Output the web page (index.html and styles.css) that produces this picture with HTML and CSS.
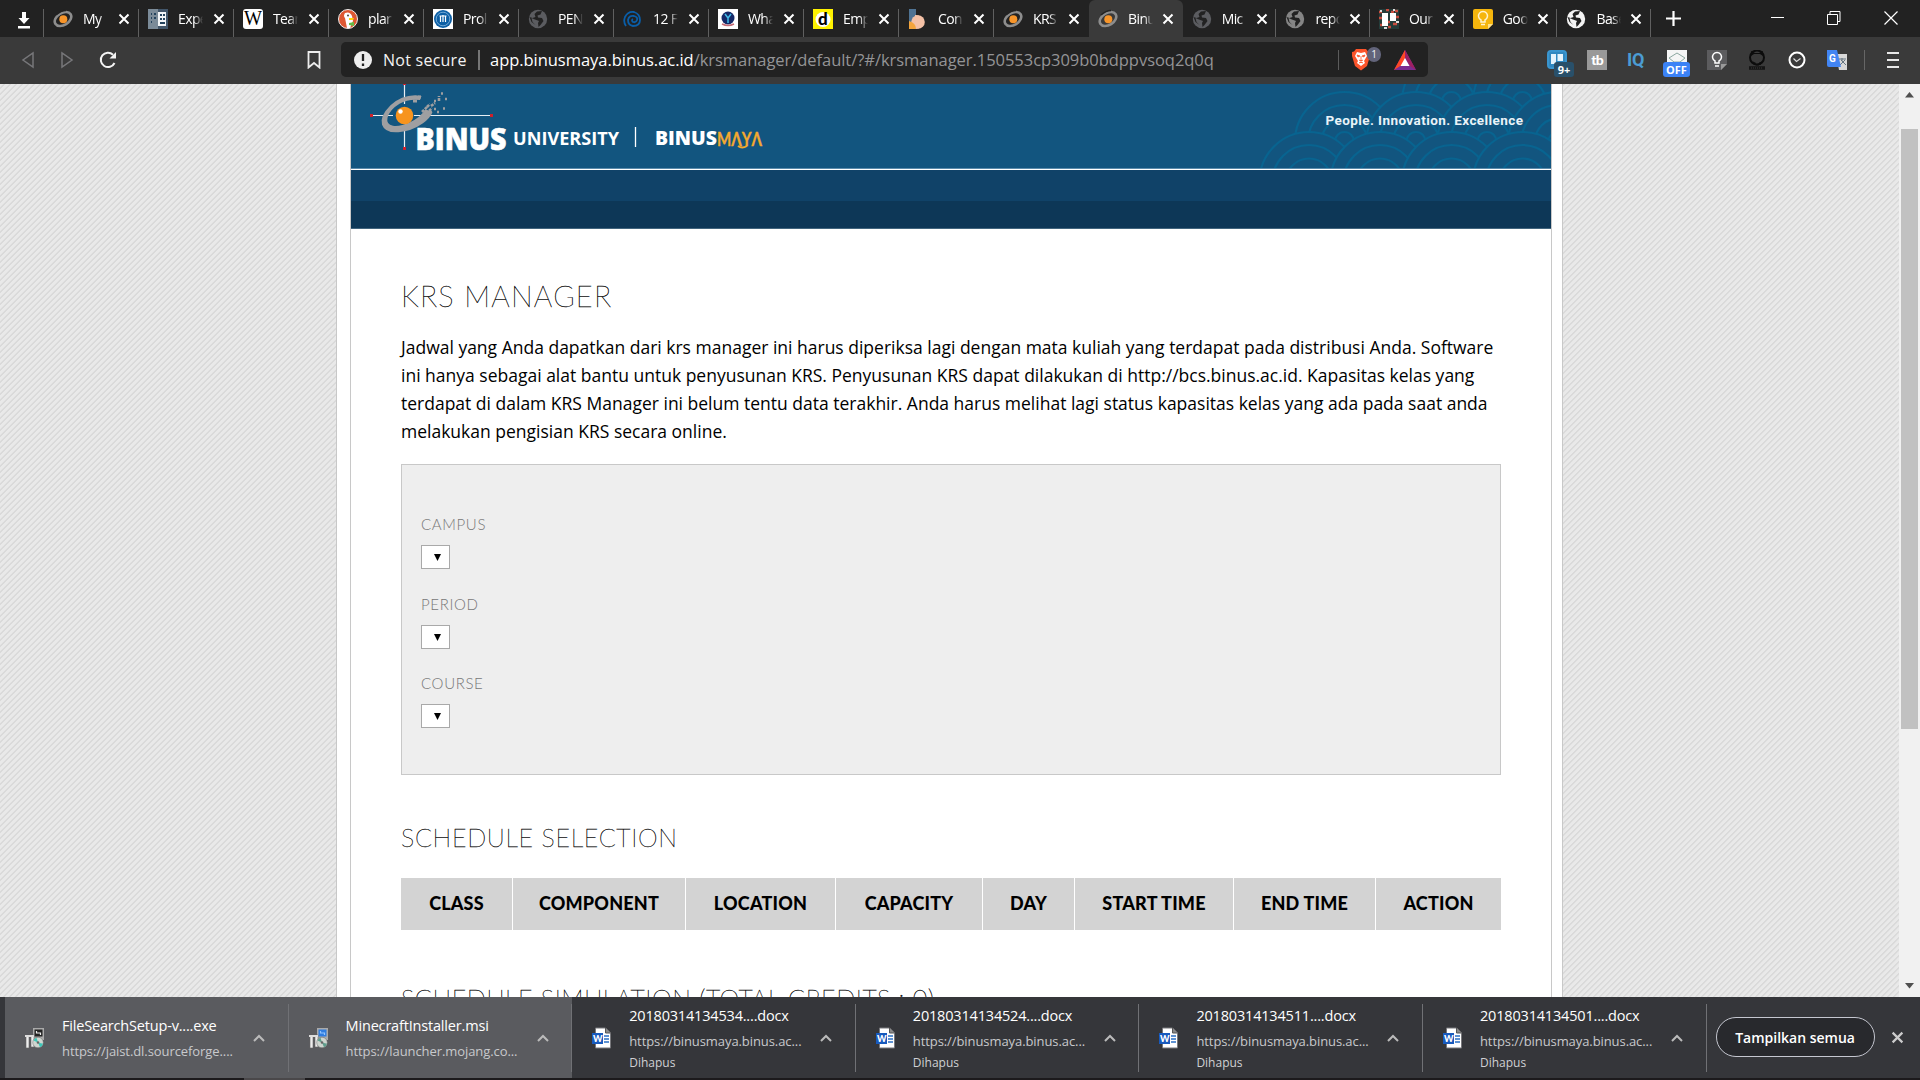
FILE: index.html
```html
<!DOCTYPE html>
<html lang="id">
<head>
<meta charset="utf-8">
<title>Binusmaya - KRS Manager</title>
<link rel="stylesheet" href="styles.css">
</head>
<body>
<svg class="defs" width="0" height="0">
  <symbol id="binus" viewBox="0 0 20 20"><ellipse cx="10" cy="10" rx="9" ry="6" transform="rotate(-32 10 10)" fill="none" stroke="#8d8d8d" stroke-width="2.600"/><path d="M3 6Q8 1.500 13 1.500" stroke="#222" stroke-width="1.500" fill="none"/><circle cx="10.300" cy="10.300" r="4" fill="#f7952a"/></symbol>
  <symbol id="globe" viewBox="0 0 20 20"><circle cx="10" cy="10" r="9.200" fill="currentColor"/><path d="M9 2.500l5-.5-1.500 3.500-3 1 .5 2 4 .5 1.500 3-3 4-2 2-.5-4 1-2-4-1.500-3.500-1.500 1 4 3 3-4-3-2-5 3 1 3-1-1-3z" fill="#222"/></symbol>
  <symbol id="word" viewBox="0 0 20 22"><path d="M3.500 1h10l5 5v15h-15z" fill="#fff" stroke="#77777b"/><path d="M13.500 1v5h5" fill="#888" stroke="#555"/><path d="M12 9h5M12 12h5M12 15h5" stroke="#2a6fc4" stroke-width="1.300"/><path d="M0 6h11v11H0z" fill="#185abd"/><text x="1" y="14.700" font-family="Lato, sans-serif" font-weight="900" font-size="9" fill="#fff">W</text></symbol>
  <symbol id="setup" viewBox="0 0 20 22"><path d="M8 1h11v12H8z" fill="#aaa"/><path d="M9.500 2.500h8v7h-8z" fill="var(--screen)"/><path d="M11.500 4v2h4v2" fill="none" stroke="var(--mark)" stroke-width="1.200"/><path d="M1 9h3v12H1zM6 8h3v12H6z" fill="#eee" stroke="#666" stroke-width=".6"/><path d="M0 9h9" stroke="#ddd" stroke-width="2"/><circle cx="13" cy="15.500" r="5.300" fill="#cfd6d0" stroke="#666" stroke-width=".5"/><path d="M13 15.500l-4.500-2a5 5 0 0 1 3-2.800zM13 15.500l2 4.800a5 5 0 0 0 3-3.500z" fill="var(--disc)"/><circle cx="13" cy="15.500" r="1.300" fill="#666"/></symbol>
  <symbol id="x" viewBox="0 0 12 12"><path d="M1.500 1.500l9 9M10.500 1.500l-9 9" stroke="currentColor" stroke-width="2"/></symbol>
  <symbol id="up" viewBox="0 0 12 8"><path d="M1 7l5-5 5 5" fill="none" stroke="#bbb" stroke-width="2"/></symbol>
</svg>

<header class="tabs">
  <div class="pinned"><svg width="14" height="18" viewBox="0 0 14 18"><path d="M5 1h4v6h3.500L7 13 1.500 7H5zM1 15h12v2.500H1z" fill="#fff"/></svg></div>
  <div class="tab"><svg class="fav"><use href="#binus"/></svg><span>My</span><svg class="close"><use href="#x"/></svg></div>
  <div class="tab"><svg class="fav" viewBox="0 0 20 20"><path d="M0 0h10v20H0z" fill="#7b8b98"/><path d="M10 0h10v20H10z" fill="#42566a"/><path d="M10 3h8v14h-8z" fill="#f2f5f7"/><path d="M3 4h1v2H3zM6 4h2v2H6zM3 8h1v2H3zM6 8h2v2H6zM3 12h1v2H3zM12 5h2v2h-2zM15 5h2v2h-2zM12 9h2v2h-2zM15 9h2v2h-2zM12 13h5v2h-5z" fill="#24435d"/></svg><span>Expe</span><svg class="close"><use href="#x"/></svg></div>
  <div class="tab"><svg class="fav" viewBox="0 0 20 20"><rect width="20" height="20" rx="3" fill="#fff"/><text x="1" y="16" class="wiki" textLength="18" lengthAdjust="spacingAndGlyphs">W</text></svg><span>Tear</span><svg class="close"><use href="#x"/></svg></div>
  <div class="tab"><svg class="fav" viewBox="0 0 20 20"><circle cx="10" cy="10" r="9.500" fill="#de5833" stroke="#eee"/><path d="M7 4q5-2 7 3l1 5-3 7h-3L7 9q-2-2 0-5z" fill="#fff"/><path d="M11 9h5l-1 2h-4z" fill="#fdd20a"/><path d="M11 14l5-1v4l-5-1z" fill="#65bc46"/><circle cx="10" cy="6.500" r=".9" fill="#333"/></svg><span>plar</span><svg class="close"><use href="#x"/></svg></div>
  <div class="tab"><svg class="fav" viewBox="0 0 20 20"><path d="M0 0h20v20H0z" fill="#fff"/><circle cx="10" cy="10" r="9" fill="#0c5fa5"/><circle cx="10" cy="10" r="6.800" fill="none" stroke="#9cc6e8" stroke-width=".7"/><path d="M6.500 7h7M7.500 7v6M10 6v7M12.500 7v6" stroke="#fff" stroke-width="1.200"/></svg><span>Prol</span><svg class="close"><use href="#x"/></svg></div>
  <div class="tab"><svg class="fav dim"><use href="#globe"/></svg><span>PEN</span><svg class="close"><use href="#x"/></svg></div>
  <div class="tab"><svg class="fav" viewBox="0 0 20 20"><path d="M3 17q-3-4-1-9 3-6 9-5 6 2 6 8t-7 6q-5-1-5-6 1-5 6-4 4 1 3 4-1 3-4 2-2-2 0-3" fill="none" stroke="#0a5ea8" stroke-width="1.800"/></svg><span>12 F</span><svg class="close"><use href="#x"/></svg></div>
  <div class="tab"><svg class="fav" viewBox="0 0 20 20"><path d="M0 0h20v20H0z" fill="#fff"/><circle cx="10" cy="9" r="6.500" fill="#152968"/><path d="M7 5l3 4 3-4M10 9v5" fill="none" stroke="#43bde9" stroke-width="1.500"/><path d="M4 15q6 3 12 0" fill="none" stroke="#c56a75" stroke-width="1.500"/></svg><span>Wha</span><svg class="close"><use href="#x"/></svg></div>
  <div class="tab"><svg class="fav" viewBox="0 0 20 20"><path d="M0 0h20v20H0z" fill="#fff200"/><circle cx="10" cy="10.500" r="7.500" fill="#fff"/><text x="5" y="16" class="fav-d">d</text></svg><span>Emp</span><svg class="close"><use href="#x"/></svg></div>
  <div class="tab"><svg class="fav" viewBox="0 0 20 20"><path d="M1 0h7v20H1z" fill="#4f7393"/><path d="M8 6a7 7 0 0 1 0 14H7V6z" fill="#f4c1a6"/><circle cx="10" cy="13" r="6.800" fill="#f4c1a6"/><path d="M1 12q7 2 7 8H1z" fill="#f3a43c"/></svg><span>Con</span><svg class="close"><use href="#x"/></svg></div>
  <div class="tab last"><svg class="fav"><use href="#binus"/></svg><span>KRS</span><svg class="close"><use href="#x"/></svg></div>
  <div class="tab slim active"><svg class="fav"><use href="#binus"/></svg><span>Binu</span><svg class="close"><use href="#x"/></svg></div>
  <div class="tab slim"><svg class="fav dim"><use href="#globe"/></svg><span>Mic</span><svg class="close"><use href="#x"/></svg></div>
  <div class="tab slim"><svg class="fav mid"><use href="#globe"/></svg><span>repo</span><svg class="close"><use href="#x"/></svg></div>
  <div class="tab slim"><svg class="fav" viewBox="0 0 20 20"><path d="M0 0h20v20H0z" fill="#243c3a"/><path d="M0 3h3M7 1h3M16 2h3M0 9h3M1 16h3M8 13h3M17 8h3M14 15h4M9 18h3M12 3h3" stroke="#c84d3f" stroke-width="2.500"/><path d="M1 1h2v2H1zM14 0h2v2h-2zM17 12h3v2h-3zM5 18h3v2H5z" fill="#ddd"/><path d="M3 4h6v13H3zM11 4h6v8h-6z" fill="#fff"/></svg><span>Our</span><svg class="close"><use href="#x"/></svg></div>
  <div class="tab slim"><svg class="fav" viewBox="0 0 20 20"><path d="M2 0h16a2 2 0 0 1 2 2v13l-5 5H2a2 2 0 0 1-2-2V2a2 2 0 0 1 2-2z" fill="#f6b60d"/><path d="M15 20v-5h5z" fill="#ffe28a"/><path d="M8 13v-2a4.500 4.500 0 1 1 4 0v2zM8 15.500h4" fill="none" stroke="#fff3d0" stroke-width="1.500"/></svg><span>Goo</span><svg class="close"><use href="#x"/></svg></div>
  <div class="tab slim"><svg class="fav bright"><use href="#globe"/></svg><span>Base</span><svg class="close"><use href="#x"/></svg></div>
  <svg class="new-tab" width="15" height="15" viewBox="0 0 15 15"><path d="M7.500 0v15M0 7.500h15" stroke="#fff" stroke-width="2.200"/></svg>
  <div class="window-buttons">
    <svg width="14" height="14" viewBox="0 0 14 14"><path d="M1 6.500h13" stroke="#fff"/></svg>
    <svg width="14" height="14" viewBox="0 0 14 14"><path d="M.5 3.500h10v10H.5zM3 3.500v-3h10v10h-2.500" fill="none" stroke="#fff"/></svg>
    <svg width="14" height="14" viewBox="0 0 14 14"><path d="M.5.5l13 13M13.500.5l-13 13" stroke="#fff" stroke-width="1.200"/></svg>
  </div>
</header>

<nav class="toolbar">
  <div class="nav-buttons">
    <svg width="14" height="18" viewBox="0 0 14 18"><path d="M12 2v14L2 9z" fill="none" stroke="#77777a" stroke-width="1.500"/></svg>
    <svg width="14" height="18" viewBox="0 0 14 18"><path d="M2 2v14l10-7z" fill="none" stroke="#77777a" stroke-width="1.500"/></svg>
    <svg width="18" height="18" viewBox="0 0 18 18"><path d="M15.500 12A7.200 7.200 0 1 1 14 3.700" fill="none" stroke="#f4f4f4" stroke-width="2"/><path d="M17 1v6.500h-6.500z" fill="#f4f4f4"/></svg>
  </div>
  <svg class="bookmark" width="14" height="18" viewBox="0 0 14 18"><path d="M1.500 1h11v15.500L7 12l-5.500 4.500z" fill="none" stroke="#ededed" stroke-width="1.800"/></svg>
  <div class="address">
    <svg width="18" height="18" viewBox="0 0 18 18"><circle cx="9" cy="9" r="9" fill="#eee"/><path d="M9 3v7M9 12.500v2.500" stroke="#222" stroke-width="2.300"/></svg>
    <span class="insecure">Not secure</span><i></i>
    <span class="url"><b>app.binusmaya.binus.ac.id</b>/krsmanager/default/?#/krsmanager.150553cp309b0bdppvsoq2q0q</span>
    <i class="thin"></i>
    <span class="shield"><svg width="20" height="23" viewBox="0 0 20 23"><path d="M5 1h10l2 2.500 2 .5v4l-3 10-6 4.500L4 18 1 8V4l2-.5z" fill="#fb542b"/><path d="M6 4l4 1 4-1 2 4-3 5 1 2-4 3-4-3 1-2-3-5z" fill="#fff"/><path d="M6 7l3 1-2 1zM14 7l-3 1 2 1zM10 8v5M8 12l2 1 2-1M8 15l2-1 2 1" fill="#fb542b" stroke="#fb542b" stroke-width=".8"/></svg><em>1</em></span>
    <svg class="bat" width="22" height="20" viewBox="0 0 22 20"><path d="M11 0L0 20h22z" fill="#7b2d91"/><path d="M11 0L0 20l11-7z" fill="#ff4724"/><path d="M11 0l11 20-6-4-5-9z" fill="#9e1f63"/><path d="M11 8l4.500 8h-9z" fill="#fff"/></svg>
  </div>
  <div class="extensions">
    <span class="ext"><svg width="20" height="20" viewBox="0 0 20 20"><rect x="1" y="1" width="18" height="17" rx="3" fill="#3188c0" stroke="#3995cf" stroke-width="2"/><path d="M4 4h5v10H4zM10.500 4H16v7h-5.500z" fill="#e6f4fc"/></svg><em class="nine">9+</em></span>
    <span class="ext tb">tb</span>
    <span class="ext iq">IQ</span>
    <span class="ext"><svg width="20" height="20" viewBox="0 0 20 20"><path d="M0 0h20v20H0z" fill="#f5f5f5"/><path d="M2 8l8-5 8 5-5 4H7z" fill="none" stroke="#8ba7a0"/></svg><em class="off">OFF</em></span>
    <svg width="20" height="20" viewBox="0 0 20 20"><path d="M0 0h20v14l-6 6H0z" fill="#5c5c5e"/><path d="M14 20v-6h6z" fill="#999"/><path d="M8 13v-2a4.500 4.500 0 1 1 4 0v2zM8 16h4" fill="none" stroke="#fff" stroke-width="1.500"/></svg>
    <svg width="20" height="20" viewBox="0 0 20 20"><circle cx="10" cy="7.500" r="7" fill="none" stroke="#0c0c0c" stroke-width="2"/><path d="M4 1l4 2h4l4-2v5l-3-2H7L4 6z" fill="#0c0c0c"/><path d="M5.500 11q2 1.500 3 1.500v3h3.500v-3q1.500 0 3-1.500l-1.500 4h-6z" fill="#0c0c0c"/><path d="M2 18h16" stroke="#151515" stroke-width="3.500"/><path d="M4 18h12" stroke="#3a3a3a" stroke-dasharray="1 1"/></svg>
    <svg width="20" height="20" viewBox="0 0 20 20"><circle cx="10" cy="10" r="7.500" fill="none" stroke="#fff" stroke-width="2"/><path d="M6.500 8.500l3 3 4-3" fill="none" stroke="#ddd" stroke-width="1.200"/></svg>
    <svg width="20" height="20" viewBox="0 0 20 20"><path d="M9 4h11v16h-8z" fill="#d8d8d8"/><path d="M12 9h7M15 8v3M13 15l5-5M14 10l5 5" stroke="#657580"/><path d="M0 0h10l4 17H2a2 2 0 0 1-2-2z" fill="#4285f4"/><text x="2" y="12" class="fav-g">G</text></svg>
  </div>
  <i class="tool-sep"></i>
  <svg class="menu" width="12" height="18" viewBox="0 0 12 18"><path d="M0 2h12M0 9h12M0 16h12" stroke="#e8e8e8" stroke-width="2"/></svg>
</nav>

<div class="viewport">
  <div class="page">
    <div class="outer"><main class="inner">
      <div class="brand">
        <svg class="logo" width="480" height="84" viewBox="351 84 480 84">
          <path d="M404.500 84v20M404.500 126v22M372 115.500h21M414 115.500h77" stroke="#e7eff5" stroke-width="1.200"/>
          <path d="M403 84h3v1h-3zM370 114h3v3h-3zM490 114h3v3h-3zM403 147h3v3h-3z" fill="#cf202b"/>
          <path d="M420 100l1.500-4-6-.8q-14-.2-25 10-11 11-8.500 19.500 3 8.500 16.500 7.500 13-1 24.500-9 7-5 9.500-11l-7-3q-5 8-15.500 13-10 4.500-17 3.500-7-1.500-5.500-8 2-8 12-14 9-5 20.500-3.700z" fill="#9f9fa1"/>
          <path d="M418 97h3M413 101h4" stroke="#9f9fa1" stroke-width="3"/>
          <path d="M422 112l5-5M426 115l6-5M427 107l3-3M431 106l4-3M429 111l3-3M434 109h2M437 112h2M439 101v-5M443 108.500h2M445 99h2M441 93.500h2M434 101h2" stroke="#9f9fa1" stroke-width="2.600" stroke-dasharray="3 1"/>
          <circle cx="404.500" cy="115.500" r="8.800" fill="#f7941e"/><circle cx="400.500" cy="111.500" r="2.200" fill="#fff"/>
          <text x="415.500" y="149.500" class="lg heavy big" font-size="30" textLength="91" lengthAdjust="spacingAndGlyphs">BINUS</text>
          <text x="513" y="145.300" class="lg bold" font-size="18.500" textLength="106" lengthAdjust="spacingAndGlyphs">UNIVERSITY</text>
          <path d="M635.500 127v20" stroke="#fff" stroke-width="1.300"/>
          <text x="655" y="144.500" class="lg heavy" font-size="18.500" textLength="62" lengthAdjust="spacingAndGlyphs">BINUS</text>
          <text x="717" y="145.500" class="lg maya" font-size="19" textLength="45" lengthAdjust="spacingAndGlyphs">MΛYΛ</text>
          <path d="M738 146q4 3 9 0" fill="none" stroke="#f3a82f" stroke-width="2"/>
        </svg>
        <svg class="waves" width="311" height="84" viewBox="1240 84 311 84">
          <defs><g id="w"><circle r="49.500"/><circle r="36.500"/><circle r="23"/><circle r="9.500"/></g></defs>
          <g fill="#12557f" stroke="#086490" stroke-width="2.200">
            <use href="#w" x="1451.500" y="101.500"/><use href="#w" x="1522.500" y="101.500"/>
            <use href="#w" x="1344.500" y="141.500"/><use href="#w" x="1416" y="141.500"/><use href="#w" x="1487" y="141.500"/><use href="#w" x="1558" y="141.500"/>
            <use href="#w" x="1309" y="181.500"/><use href="#w" x="1380" y="181.500"/><use href="#w" x="1451.500" y="181.500"/><use href="#w" x="1522.500" y="181.500"/>
          </g>
          <text x="1325.500" y="124.500" class="tagline" textLength="197.500">People. Innovation. Excellence</text>
        </svg>
      </div>
      <div class="menubar"></div>
      <article class="content">
        <h1>KRS MANAGER</h1>
        <p>Jadwal yang Anda dapatkan dari krs manager ini harus diperiksa lagi dengan mata kuliah yang terdapat pada distribusi Anda. Software<br>ini hanya sebagai alat bantu untuk penyusunan KRS. Penyusunan KRS dapat dilakukan di http://bcs.binus.ac.id. Kapasitas kelas yang<br>terdapat di dalam KRS Manager ini belum tentu data terakhir. Anda harus melihat lagi status kapasitas kelas yang ada pada saat anda<br>melakukan pengisian KRS secara online.</p>
        <section class="filters">
          <div class="field"><label>CAMPUS</label><div class="select"><svg width="7" height="7"><path d="M0 0h7L3.500 7z"/></svg></div></div>
          <div class="field"><label>PERIOD</label><div class="select"><svg width="7" height="7"><path d="M0 0h7L3.500 7z"/></svg></div></div>
          <div class="field"><label>COURSE</label><div class="select"><svg width="7" height="7"><path d="M0 0h7L3.500 7z"/></svg></div></div>
        </section>
        <h2>SCHEDULE SELECTION</h2>
        <div class="thead"><span>CLASS</span><span>COMPONENT</span><span>LOCATION</span><span>CAPACITY</span><span>DAY</span><span>START TIME</span><span>END TIME</span><span>ACTION</span></div>
        <h2 class="simulation">SCHEDULE SIMULATION (TOTAL CREDITS : 0)</h2>
      </article>
    </main></div>
  </div>
  <aside class="scroll"><svg width="9" height="6"><path d="M0 5.500L4.500 0 9 5.500z" fill="#505050"/></svg><div class="thumb"></div><svg width="9" height="6"><path d="M0 0h9L4.500 5.500z" fill="#505050"/></svg></aside>
</div>

<footer class="downloads">
  <div class="item hot dos"><svg class="file"><use href="#setup"/></svg><div class="info"><strong>FileSearchSetup-v....exe</strong><span>https://jaist.dl.sourceforge....</span></div><svg class="chev"><use href="#up"/></svg></div>
  <div class="item hot msi"><svg class="file"><use href="#setup"/></svg><div class="info"><strong>MinecraftInstaller.msi</strong><span>https://launcher.mojang.co...</span></div><svg class="chev"><use href="#up"/></svg></div>
  <div class="item"><svg class="file"><use href="#word"/></svg><div class="info"><strong>20180314134534....docx</strong><span>https://binusmaya.binus.ac...</span><small>Dihapus</small></div><svg class="chev"><use href="#up"/></svg></div>
  <div class="item"><svg class="file"><use href="#word"/></svg><div class="info"><strong>20180314134524....docx</strong><span>https://binusmaya.binus.ac...</span><small>Dihapus</small></div><svg class="chev"><use href="#up"/></svg></div>
  <div class="item"><svg class="file"><use href="#word"/></svg><div class="info"><strong>20180314134511....docx</strong><span>https://binusmaya.binus.ac...</span><small>Dihapus</small></div><svg class="chev"><use href="#up"/></svg></div>
  <div class="item"><svg class="file"><use href="#word"/></svg><div class="info"><strong>20180314134501....docx</strong><span>https://binusmaya.binus.ac...</span><small>Dihapus</small></div><svg class="chev"><use href="#up"/></svg></div>
  <button>Tampilkan semua</button>
  <svg class="dismiss"><use href="#x"/></svg>
</footer>
<div class="taskbar"><i></i></div>
</body>
</html>
```
FILE: styles.css
```css
* { box-sizing: border-box; }
body { margin: 0; width: 1920px; height: 1080px; overflow: hidden; display: flex; flex-direction: column; background: #fff; font-family: "Open Sans", "Noto Sans", sans-serif; }
svg { display: block; flex: none; }
.defs { position: absolute; }
i, em { font-style: normal; }

.tabs { height: 37px; flex: none; display: flex; background: #222; color: #fff; }
.pinned { width: 44px; border-right: 1px solid #606060; margin-top: 9px; height: 28px; padding: 2px 0 0 17px; flex: none; }
.tab { width: 95px; height: 28px; margin-top: 9px; flex: none; display: flex; align-items: flex-start; padding-left: 9px; border-right: 1px solid #606060; }
.tab.slim { width: 93.700px; }
.tab.last, .tab.active { border-right-color: transparent; }
.tab.active { background: #3a3a3a; border-right: 0; border-radius: 6px 6px 0 0; height: 37px; margin-top: 0; padding-top: 9px; }
.fav { width: 20px; height: 20px; margin-right: 10px; }
.tab span { width: 25px; height: 22px; line-height: 20px; font-size: 14px; letter-spacing: -.6px; overflow: hidden; white-space: nowrap; -webkit-mask-image: linear-gradient(90deg, #000 65%, transparent); mask-image: linear-gradient(90deg, #000 65%, transparent); }
.close { width: 12px; height: 12px; margin: 4px 0 0 10px; color: #fff; }
.slim .close { margin-left: 9px; }
.dim { color: #5b5c60; }
.mid { color: #858585; }
.bright { color: #f4f4f4; }
.wiki { font: 20px "Liberation Serif", serif; }
.fav-d { font: 900 17px Lato, sans-serif; }
.fav-g { font: 700 10px Roboto, sans-serif; fill: #fff; }
.new-tab { margin: 11px 0 0 15px; }
.window-buttons { display: flex; gap: 43px; margin: 11px 22px 0 auto; }

.toolbar { height: 47px; flex: none; display: flex; align-items: center; background: #3a3a3a; padding-bottom: 2px; }
.nav-buttons { display: flex; gap: 25px; margin-left: 21px; width: 286px; margin-top: 1px; }
.bookmark { margin-top: 1px; }
.address { margin-left: 20px; width: 1087px; height: 35px; background: #222; border-radius: 5px; display: flex; align-items: center; padding-left: 13px; color: #f3f3f3; font-size: 16px; white-space: nowrap; }
.insecure { margin-left: 11px; width: 86px; letter-spacing: .25px; }
.address i { width: 2px; height: 20px; background: #757575; margin: 0 10px 0 9px; }
.url { width: 848px; color: #949496; font-size: 16.500px; letter-spacing: -.04px; }
.url b { font-weight: 400; color: #fff; }
.address i.thin { width: 1px; background: #5c5c5c; margin: 0 12px 0 0; }
.shield { display: flex; width: 43px; }
.shield em { width: 14px; height: 15px; border-radius: 7px; background: #62647a; font-size: 10px; line-height: 15px; text-align: center; margin: -1px 0 0 -4px; z-index: 1; }
.extensions { display: flex; gap: 20px; margin: 1px 0 0 119px; align-items: center; }
.ext { width: 20px; height: 20px; position: relative; flex: none; }
.ext em { position: absolute; color: #fff; font-weight: 700; border-radius: 3px; text-align: center; }
.ext .nine { left: 7px; top: 12px; width: 20px; height: 15px; line-height: 15px; font-size: 11px; background: #29506a; }
.ext .off { left: -4px; top: 12px; width: 27px; height: 15px; line-height: 15px; font-size: 11px; background: #3b82f6; }
.tb { background: #999; color: #fff; font: 900 14px/20px Lato, sans-serif; text-align: center; letter-spacing: -1px; }
.iq { color: #4b9cd3; font: 700 18px/20px Roboto, sans-serif; letter-spacing: -.3px; }
.tool-sep { width: 1px; height: 20px; background: #666; margin-left: 17px; }
.menu { margin-left: 22px; }

.viewport { height: 913px; flex: none; display: flex; overflow: hidden; }
.page { width: 1899px; padding-left: 336px; background: repeating-linear-gradient(135deg, #e9e9e9 0, #e9e9e9 2px, #dadada 2.600px, #dadada 3.600px, #e9e9e9 4.243px); overflow: hidden; }
.outer { width: 1227px; height: 1300px; background: #fff; border: 1px solid #c8c8c8; border-width: 0 1px; padding: 0 10px 0 13px; }
.inner { width: 1202px; height: 1300px; border: 1px solid #c8c8c8; border-width: 0 1px; }
.brand { height: 86px; display: flex; justify-content: space-between; background: #12557f; border-bottom: 1px solid #fff; box-shadow: inset 0 -1px #5b8cac; }
.lg { font-family: "Open Sans", sans-serif; fill: #fff; }
.heavy { font-weight: 800; }
.big { stroke: #fff; stroke-width: .6px; }
.bold { font-weight: 700; }
.maya { fill: #f3a82f; font-family: Lato, sans-serif; font-weight: 700; stroke: #f3a82f; stroke-width: .3px; }
.tagline { font: 700 13.500px Roboto, sans-serif; fill: #eaf3f8; }
.menubar { height: 59px; background: linear-gradient(#104268 31px, #0d3757 31px); border-bottom: 1px solid #41657e; }
.content { padding: 47px 50px 0; color: #000; }
h1, h2 { margin: 0; font-family: Lato, sans-serif; font-weight: 100; white-space: nowrap; -webkit-text-stroke: .35px #111; }
h1 { font-size: 29px; line-height: 40px; letter-spacing: 1.200px; }
p { margin: 17px 0 19px; font-size: 17.500px; line-height: 28px; white-space: nowrap; }
.filters { height: 311px; background: #eee; border: 1px solid #c8c8c8; padding: 46px 19px 0; display: flex; flex-direction: column; }
.field { height: 79.700px; }
label { display: block; height: 34px; font: 300 15px/26px Lato, sans-serif; color: #777; letter-spacing: .65px; }
.select { width: 29px; height: 24px; background: #fff; border: 1px solid #a9a9a9; display: flex; padding: 8px 0 0 12px; }
h2 { margin: 42px 0 21px; font-size: 25px; line-height: 40px; letter-spacing: .65px; }
.thead { display: grid; grid-template-columns: 111px 172px 149px 146px 91px 158px 141px 125px; gap: 1px; height: 52px; }
.thead span { background: #d3d3d3; text-align: center; font: 900 18px/51px Lato, sans-serif; letter-spacing: .2px; white-space: nowrap; }
h2.simulation { margin-top: 48px; letter-spacing: .57px; }

.scroll { width: 21px; background: #f1f1f1; display: flex; flex-direction: column; align-items: center; padding: 8px 0; }
.thumb { width: 17px; height: 600px; background: #c1c1c1; margin: 31px 0 auto; }

.downloads { height: 81px; flex: none; display: flex; background: #35363a; padding-left: 5px; color: #fff; }
.item { width: 283.600px; display: flex; align-items: center; padding-left: 20px; flex: none; border: 0 solid; border-image: linear-gradient(transparent 8px, #707175 8px, #707175 74px, transparent 74px) 1; border-width: 0 1px 0 0; }
.hot { background: #5a5b5f; }
.hot .info { padding-top: 2px; }
.dos { --screen: #222; --disc: #3dc7b8; --mark: #eee; }
.msi { --screen: #2f7de0; --disc: #5f9e8d; --mark: #8fc3ff; }
.file { width: 20px; height: 22px; }
.info { width: 186px; margin-left: 17px; display: flex; flex-direction: column; white-space: nowrap; }
.info strong { font-weight: 400; font-size: 14.500px; line-height: 26px; letter-spacing: -.18px; }
.info span { font-size: 13px; line-height: 25px; letter-spacing: -.08px; color: #c8c9cc; }
.info small { font-size: 12px; line-height: 18px; color: #d0d1d4; }
.chev { width: 12px; height: 8px; margin-left: 5px; }
.downloads button { width: 159px; height: 40px; margin: 20px 0 0 9px; padding: 0; border: 1px solid #c5c7d0; border-radius: 20px; background: #28292d; color: #fff; font: 600 14px "Open Sans", sans-serif; }
.dismiss { width: 13px; height: 13px; margin: 34px 0 0 16px; color: #ccc; }
.taskbar { height: 2px; flex: none; background: #1c1a1c; display: flex; padding-left: 244px; }
.taskbar i { width: 61px; background: #4a484a; }
```
